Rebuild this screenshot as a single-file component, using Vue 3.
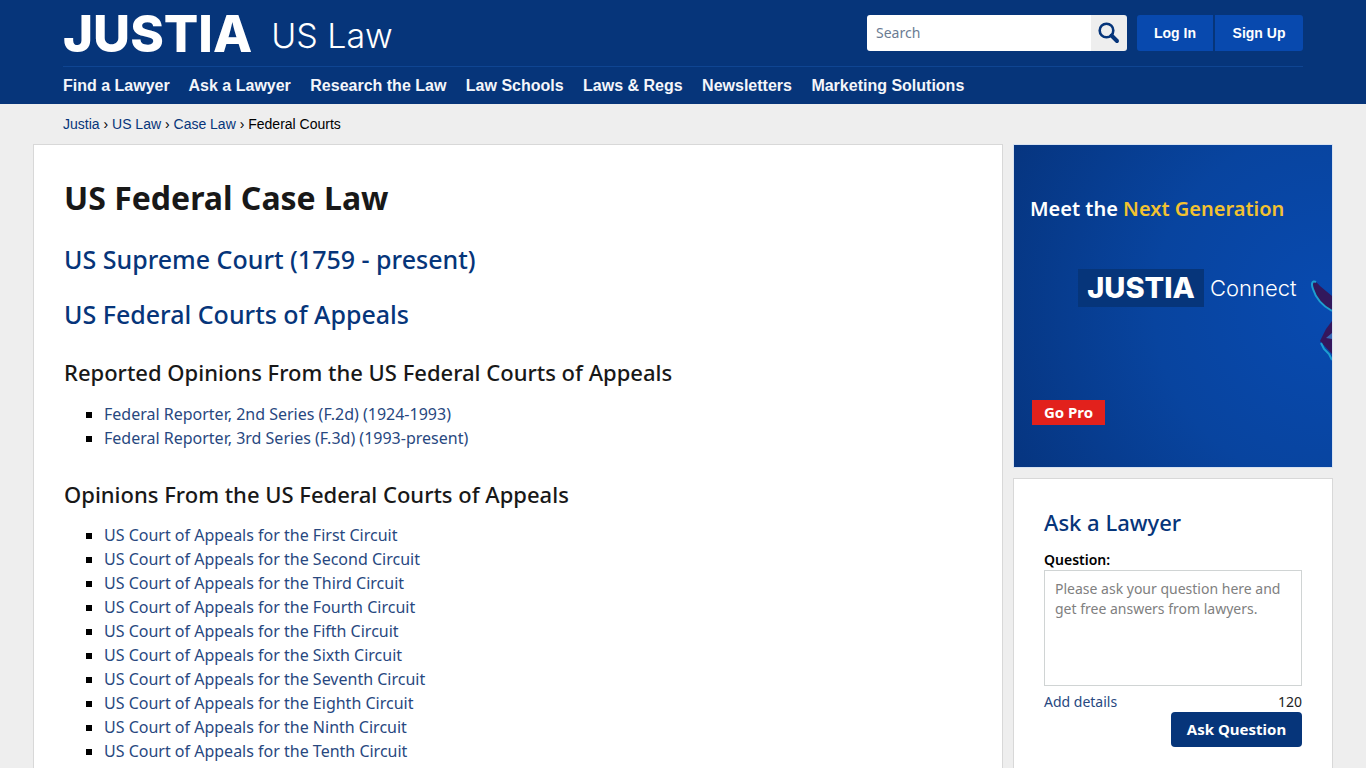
<script setup>
const nav = ['Find a Lawyer', 'Ask a Lawyer', 'Research the Law', 'Law Schools', 'Laws & Regs', 'Newsletters', 'Marketing Solutions']
const crumbs = ['Justia', 'US Law', 'Case Law']
const reporters = ['Federal Reporter, 2nd Series (F.2d) (1924-1993)', 'Federal Reporter, 3rd Series (F.3d) (1993-present)']
const circuits = ['First', 'Second', 'Third', 'Fourth', 'Fifth', 'Sixth', 'Seventh', 'Eighth', 'Ninth', 'Tenth']
</script>

<template>
  <div class="page">
    <header class="header">
      <div class="inner">
        <div class="top">
          <a class="brand" href="#"><span class="logo">JUSTIA</span><span class="section">US Law</span></a>
          <form class="search" role="search" @submit.prevent>
            <input type="search" placeholder="Search" aria-label="Search" />
            <button type="submit" aria-label="Search">
              <svg viewBox="0 0 22 22" width="22" height="22" aria-hidden="true">
                <circle cx="8.5" cy="8.5" r="6.8" fill="none" stroke="#06357a" stroke-width="2.6" />
                <path d="M13.5 13.5L19 19" stroke="#06357a" stroke-width="4" stroke-linecap="round" />
              </svg>
            </button>
          </form>
          <div class="account">
            <a class="login" href="#">Log In</a>
            <a class="signup" href="#">Sign Up</a>
          </div>
        </div>
        <nav class="nav">
          <template v-for="n in nav" :key="n"><a href="#">{{ n }}</a>{{ ' ' }}</template>
        </nav>
      </div>
    </header>

    <nav class="crumbs" aria-label="Breadcrumb">
      <template v-for="c in crumbs" :key="c"><a href="#">{{ c }}</a> › </template>
      <span>Federal Courts</span>
    </nav>

    <div class="columns">
      <main class="card main">
        <h1>US Federal Case Law</h1>
        <h2><a href="#">US Supreme Court (1759 - present)</a></h2>
        <h2><a href="#">US Federal Courts of Appeals</a></h2>
        <h3>Reported Opinions From the US Federal Courts of Appeals</h3>
        <ul>
          <li v-for="r in reporters" :key="r"><a href="#">{{ r }}</a></li>
        </ul>
        <h3>Opinions From the US Federal Courts of Appeals</h3>
        <ul>
          <li v-for="c in circuits" :key="c"><a href="#">US Court of Appeals for the {{ c }} Circuit</a></li>
        </ul>
      </main>

      <aside class="side">
        <a class="promo" href="#">
          <svg class="hand" viewBox="0 0 24 86" width="24" height="86" aria-hidden="true">
            <path d="M4 7C5 4 9 6 12 10L24 20V35C14 31 6 19 4 7Z" fill="#32185c" />
            <path d="M8 6C4 4 3 8 5 13C8 23 15 30 24 35" fill="none" stroke="#1d9fd0" stroke-width="2" />
            <path d="M24 45L18 53L12 65L24 78Z" fill="#35165c" />
            <path d="M18 62L24 57V63Z" fill="#3869b6" />
            <path d="M13 67L16 73L21 78L24 84" fill="none" stroke="#1d9fd0" stroke-width="2" />
          </svg>
          <span class="meet">Meet the <b>Next Generation</b></span>
          <span class="connect"><span class="mini">JUSTIA</span><span class="word">Connect</span></span>
          <span class="gopro">Go Pro</span>
        </a>

        <form class="card ask" @submit.prevent>
          <h2><a href="#">Ask a Lawyer</a></h2>
          <label for="question">Question:</label>
          <textarea id="question" placeholder="Please ask your question here and get free answers from lawyers."></textarea>
          <div class="meta"><a href="#">Add details</a><span>120</span></div>
          <button type="submit">Ask Question</button>
        </form>
      </aside>
    </div>
  </div>
</template>

<style>
body { margin: 0; background: #eee; }
</style>

<style scoped>
.page, .page * { box-sizing: border-box; }
.page {
  min-height: 100vh;
  display: flex;
  flex-direction: column;
  background: #eee;
  color: #000;
  font-family: "Noto Sans", "Open Sans", sans-serif;
}
a { text-decoration: none; color: #06357a; }
.header { background: #06357a; }
.inner { max-width: 1240px; margin: 0 auto; }
.top {
  height: 67px;
  display: flex;
  align-items: flex-start;
  padding-top: 15px;
  border-bottom: 1px solid #0f4592;
}
.brand { display: flex; align-items: center; margin-right: auto; color: #fff; font-family: Inter, sans-serif; }
.logo { font-size: 51px; font-weight: 800; line-height: 34px; }
.section { margin-left: 19px; padding-top: 4px; font-size: 34px; font-weight: 300; line-height: 34px; }
.search { display: flex; width: 260px; height: 36px; border-radius: 3px; overflow: hidden; }
.search input {
  flex: 1;
  min-width: 0;
  border: 0;
  outline: 0;
  padding: 0 9px 2px;
  background: #fff;
  font: 14px "Noto Sans", sans-serif;
  appearance: none;
}
.search input::placeholder { color: #6b7c93; }
.search button { width: 36px; border: 0; padding: 0; background: #eee; display: grid; place-items: center; }
.account { display: flex; gap: 2px; margin-left: 10px; font: bold 14px/36px "Liberation Sans", sans-serif; text-align: center; }
.account a { background: #0849ae; color: #fff; }
.login { width: 76px; border-radius: 3px 0 0 3px; }
.signup { width: 88px; border-radius: 0 3px 3px 0; }
.nav { font: bold 16px/37px "Liberation Sans", sans-serif; }
.nav a { color: #f4f6fa; margin-right: 15px; }
.crumbs {
  width: 100%;
  max-width: 1240px;
  height: 40px;
  margin: 0 auto;
  font: 14px/40px "Liberation Sans", sans-serif;
}
.columns {
  flex: 1;
  width: 100%;
  max-width: 1300px;
  margin: 0 auto;
  display: grid;
  grid-template-columns: 1fr 320px;
  gap: 10px;
}
.card { background: #fff; border: 1px solid #d8d8d8; border-bottom: 0; }
.main { padding: 29px 30px 4px; }
h1, h2, h3 { margin: 0; }
h1 { font-size: 32px; line-height: 48px; font-weight: 700; color: #181818; margin-bottom: 19px; }
h2 { font-size: 25px; line-height: 36px; font-weight: 500; margin-bottom: 19px; }
h3 { font-size: 22px; line-height: 32px; font-weight: 500; color: #181818; margin: 24px 0 14px; }
ul { margin: 0; padding-left: 40px; list-style: square; font-size: 16px; line-height: 24px; font-weight: 400; }
ul a, .meta a { color: #28487f; }
ul + h3 { margin: 28px 0 13px; }
.side { display: flex; flex-direction: column; gap: 10px; }
.promo {
  position: relative;
  display: flex;
  flex-direction: column;
  align-items: flex-start;
  height: 324px;
  padding: 48px 18px 0 16px;
  border: 1px solid #d8e2f0;
  background: radial-gradient(circle at 100% 50%, #084ab0 0%, #08449f 50%, #063580 100%);
  color: #fff;
}
.hand { position: absolute; right: 0; top: 131px; }
.meet { font-size: 20px; line-height: 32px; font-weight: 600; white-space: nowrap; }
.meet b { font-weight: 600; color: #f2c230; }
.connect { display: flex; gap: 6px; align-items: center; margin: 44px 0 0 48px; font-family: Inter, sans-serif; }
.mini { width: 126px; background: #06357a; font-size: 29px; font-weight: 800; line-height: 38px; text-align: center; }
.word { font-size: 22px; font-weight: 300; line-height: 38px; }
.gopro { margin: 93px 0 0 2px; width: 73px; background: #e2211c; font-size: 15px; line-height: 25px; font-weight: 700; text-align: center; }
.ask { flex: 1; display: flex; flex-direction: column; padding: 27px 30px 20px; font-size: 14px; }
.ask h2 { font-size: 22px; line-height: 32px; margin: 0 0 12px; }
.ask label { font-weight: 600; line-height: 20px; }
textarea {
  height: 116px;
  border: 1px solid #d0d4d4;
  border-radius: 0;
  padding: 8px 10px;
  resize: none;
  font: 400 14px/20px "Noto Sans", sans-serif;
}
textarea::placeholder { color: #808080; }
.meta { display: flex; justify-content: space-between; margin-top: 6px; line-height: 20px; color: #222; }
.ask button {
  align-self: flex-end;
  width: 131px;
  height: 35px;
  border: 0;
  border-radius: 4px;
  padding: 0 0 2px;
  background: #06357a;
  color: #fff;
  font: 700 15px "Noto Sans", sans-serif;
}
</style>
